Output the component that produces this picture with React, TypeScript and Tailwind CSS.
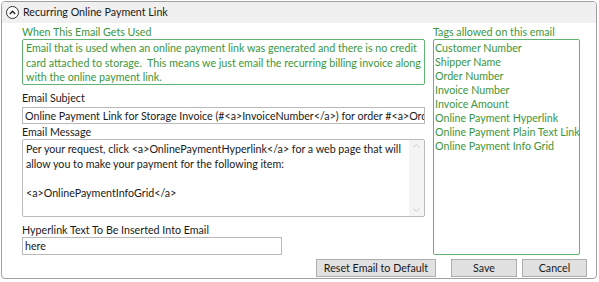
import React from 'react';

const font = { fontFamily: 'Lato, "Open Sans", sans-serif' };

const tags = [
  'Customer Number',
  'Shipper Name',
  'Order Number',
  'Invoice Number',
  'Invoice Amount',
  'Online Payment Hyperlink',
  'Online Payment Plain Text Link',
  'Online Payment Info Grid',
];

const App = () => {
  return (
    <div className="w-[599px] h-[282px] bg-white text-[10.7px] text-[#1a1a1a]" style={font}>
      <div className="absolute left-[1px] top-[1px] w-[596px] h-[278px] border border-[#a0a0a0] rounded-[4px] overflow-hidden flex flex-col">
        {/* Header */}
        <div className="h-[21px] bg-[#f0f0f0] flex items-center pl-[4px] gap-[4px] shrink-0">
          <span className="w-[13px] h-[13px] rounded-full border border-[#333] bg-white flex items-center justify-center">
            <svg width="7" height="5" viewBox="0 0 7 5">
              <path d="M0.8 4 L3.5 1.3 L6.2 4" fill="none" stroke="#222" strokeWidth="1.4" />
            </svg>
          </span>
          <span className="text-[10.7px]">Recurring Online Payment Link</span>
        </div>

        {/* Body */}
        <div className="flex gap-[8px] pl-[20px] pt-[2px]">
          <div className="w-[403px] flex flex-col">
            <div className="h-[14px] leading-[14px] text-[#3b963b]">When This Email Gets Used</div>
            <div className="h-[46px] border border-[#62b273] rounded-[2px] px-[3px] pt-[1px] leading-[14.5px] text-[#3b963b]">
              Email that is used when an online payment link was generated and there is no credit card attached to storage.&nbsp; This means we just email the recurring billing invoice along with the online payment link.
            </div>
            <div className="mt-[4px] h-[18px] leading-[18px]">Email Subject</div>
            <div className="h-[17px] border border-[#b9b9b9] px-[2px] leading-[15px] whitespace-nowrap overflow-hidden">
              Online Payment Link for Storage Invoice (#&lt;a&gt;InvoiceNumber&lt;/a&gt;) for order #&lt;a&gt;Ord
            </div>
            <div className="h-[15px] leading-[15px]">Email Message</div>
            <div className="h-[78px] border border-[#b9b9b9] rounded-[2px] flex">
              <div className="flex-1 px-[3px] pt-[2px] leading-[14.5px]">
                Per your request, click &lt;a&gt;OnlinePaymentHyperlink&lt;/a&gt; for a web page that will allow you to make your payment for the following item:
                <br />
                <br />
                &lt;a&gt;OnlinePaymentInfoGrid&lt;/a&gt;
              </div>
              <div className="w-[15px] bg-[#f4f4f4] flex flex-col justify-between items-center py-[4px]">
                <svg width="7" height="4" viewBox="0 0 7 4">
                  <path d="M0.5 3.5 L3.5 0.5 L6.5 3.5" fill="none" stroke="#c8c8c8" strokeWidth="1" />
                </svg>
                <svg width="7" height="4" viewBox="0 0 7 4">
                  <path d="M0.5 0.5 L3.5 3.5 L6.5 0.5" fill="none" stroke="#c8c8c8" strokeWidth="1" />
                </svg>
              </div>
            </div>
            <div className="mt-[5px] h-[15px] leading-[15px]">Hyperlink Text To Be Inserted Into Email</div>
            <div className="w-[260px] h-[18px] border border-[#b9b9b9] px-[2px] leading-[16px]">here</div>
          </div>

          <div className="w-[147px] flex flex-col">
            <div className="h-[14px] leading-[14px] text-[#3b963b]">Tags allowed on this email</div>
            <div className="h-[216px] border border-[#62b273] rounded-[2px] px-[1px] pt-[1px] leading-[14px] text-[#3b963b]">
              {tags.map((t) => (
                <div key={t} className="whitespace-nowrap">{t}</div>
              ))}
            </div>
          </div>
        </div>

        {/* Buttons */}
        <div className="flex justify-end pr-[9px] mt-[4px]">
          <button className="w-[120px] h-[18px] bg-[#e1e1e1] border border-[#adadad] text-[10.7px] leading-[16px]">Reset Email to Default</button>
          <button className="ml-[15px] w-[66px] h-[18px] bg-[#e1e1e1] border border-[#adadad] text-[10.7px] leading-[16px]">Save</button>
          <button className="ml-[5px] w-[65px] h-[18px] bg-[#e1e1e1] border border-[#adadad] text-[10.7px] leading-[16px]">Cancel</button>
        </div>
      </div>
    </div>
  );
};

export default App;
